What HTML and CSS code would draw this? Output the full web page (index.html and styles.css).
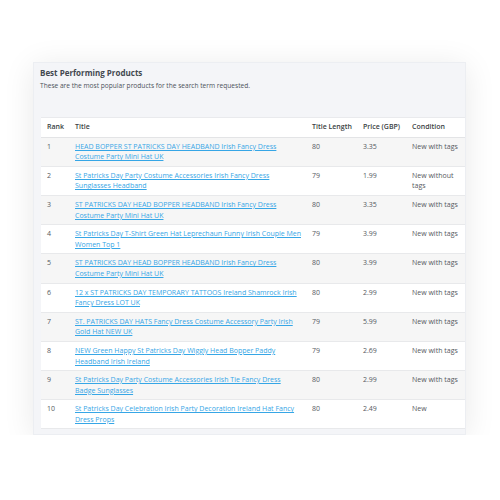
FILE: index.html
```html
<!DOCTYPE html>
<html>
<head>
<meta charset="utf-8">
<link rel="stylesheet" href="styles.css">
</head>
<body>
<div class="card">
  <div class="card-head">
    <h2 class="title">Best Performing Products</h2>
    <p class="sub">These are the most popular products for the search term requested.</p>
  </div>
  <div class="panel">
    <table class="tbl">
      <colgroup>
        <col class="c-rank"><col class="c-title"><col class="c-len"><col class="c-price"><col class="c-cond">
      </colgroup>
      <thead>
        <tr><th>Rank</th><th>Title</th><th>Title Length</th><th>Price (GBP)</th><th>Condition</th></tr>
      </thead>
      <tbody>
        <tr><td>1</td><td class="t"><a href="#">HEAD BOPPER ST PATRICKS DAY HEADBAND Irish Fancy Dress Costume Party Mini Hat UK</a></td><td>80</td><td>3.35</td><td>New with tags</td></tr>
        <tr><td>2</td><td class="t"><a href="#">St Patricks Day Party Costume Accessories Irish Fancy Dress Sunglasses Headband</a></td><td>79</td><td>1.99</td><td>New without tags</td></tr>
        <tr><td>3</td><td class="t"><a href="#">ST PATRICKS DAY HEAD BOPPER HEADBAND Irish Fancy Dress Costume Party Mini Hat UK</a></td><td>80</td><td>3.35</td><td>New with tags</td></tr>
        <tr><td>4</td><td class="t"><a href="#">St Patricks Day T-Shirt Green Hat Leprechaun Funny Irish Couple Men Women Top 1</a></td><td>79</td><td>3.99</td><td>New with tags</td></tr>
        <tr><td>5</td><td class="t"><a href="#">ST PATRICKS DAY HEAD BOPPER HEADBAND Irish Fancy Dress Costume Party Mini Hat UK</a></td><td>80</td><td>3.99</td><td>New with tags</td></tr>
        <tr><td>6</td><td class="t"><a href="#">12 x ST PATRICKS DAY TEMPORARY TATTOOS Ireland Shamrock Irish Fancy Dress LOT UK</a></td><td>80</td><td>2.99</td><td>New with tags</td></tr>
        <tr><td>7</td><td class="t"><a href="#">ST. PATRICKS DAY HATS Fancy Dress Costume Accessory Party Irish Gold Hat NEW UK</a></td><td>79</td><td>5.99</td><td>New with tags</td></tr>
        <tr><td>8</td><td class="t"><a href="#">NEW Green Happy St Patricks Day Wiggly Head Bopper Paddy Headband Irish Ireland</a></td><td>79</td><td>2.69</td><td>New with tags</td></tr>
        <tr><td>9</td><td class="t"><a href="#">St Patricks Day Party Costume Accessories Irish Tie Fancy Dress Badge Sunglasses</a></td><td>80</td><td>2.99</td><td>New with tags</td></tr>
        <tr><td>10</td><td class="t"><a href="#">St Patricks Day Celebration Irish Party Decoration Ireland Hat Fancy Dress Props</a></td><td>80</td><td>2.49</td><td>New</td></tr>
      </tbody>
    </table>
  </div>
</div>
</body>
</html>
```
FILE: styles.css
```css
html, body {
  margin: 0;
  padding: 0;
  background: #ffffff;
}
body {
  font-family: "Open Sans", "Liberation Sans", sans-serif;
  padding: 62px 34px 0 33px;
}
.card {
  width: 433px;
  height: 373px;
  box-sizing: border-box;
  background: #f4f5f8;
  border: 1px solid #eceef2;
  box-shadow: 0 4px 30px rgba(0, 0, 0, 0.09);
  overflow: hidden;
}
.card-head {
  padding: 4px 6px 0 6px;
  height: 50px;
}
.title {
  margin: 0;
  font-size: 8px;
  line-height: 12px;
  font-weight: 700;
  color: #43484f;
}
.sub {
  margin: 2px 0 0 0;
  font-size: 6.6px;
  line-height: 10px;
  color: #4c525a;
}
.panel {
  margin-left: 7px;
  background: #ffffff;
  border-top: 1px solid #e9eaed;
  width: 424px;
}
.tbl {
  width: 424px;
  table-layout: fixed;
  border-collapse: collapse;
  font-size: 7px;
  line-height: 10.6px;
  color: #55595e;
}
.c-rank { width: 28px; }
.c-title { width: 237px; }
.c-len { width: 51px; }
.c-price { width: 49px; }
.c-cond { width: 59px; }
.tbl th {
  text-align: left;
  font-weight: 600;
  color: #3b3f44;
  white-space: nowrap;
  padding: 4px 6px 4px 6px;
  border-bottom: 1px solid #e3e4e6;
}
.tbl td {
  vertical-align: top;
  padding: 4px 6px 3px 6px;
  height: 21.2px;
  border-bottom: 1px solid #e8e9eb;
}
.tbl td.t {
  padding-right: 4.5px;
}
.tbl tbody tr:nth-child(odd) td {
  background: #f6f6f6;
}
.tbl a {
  color: #36a6e6;
  text-decoration: underline;
}
```
